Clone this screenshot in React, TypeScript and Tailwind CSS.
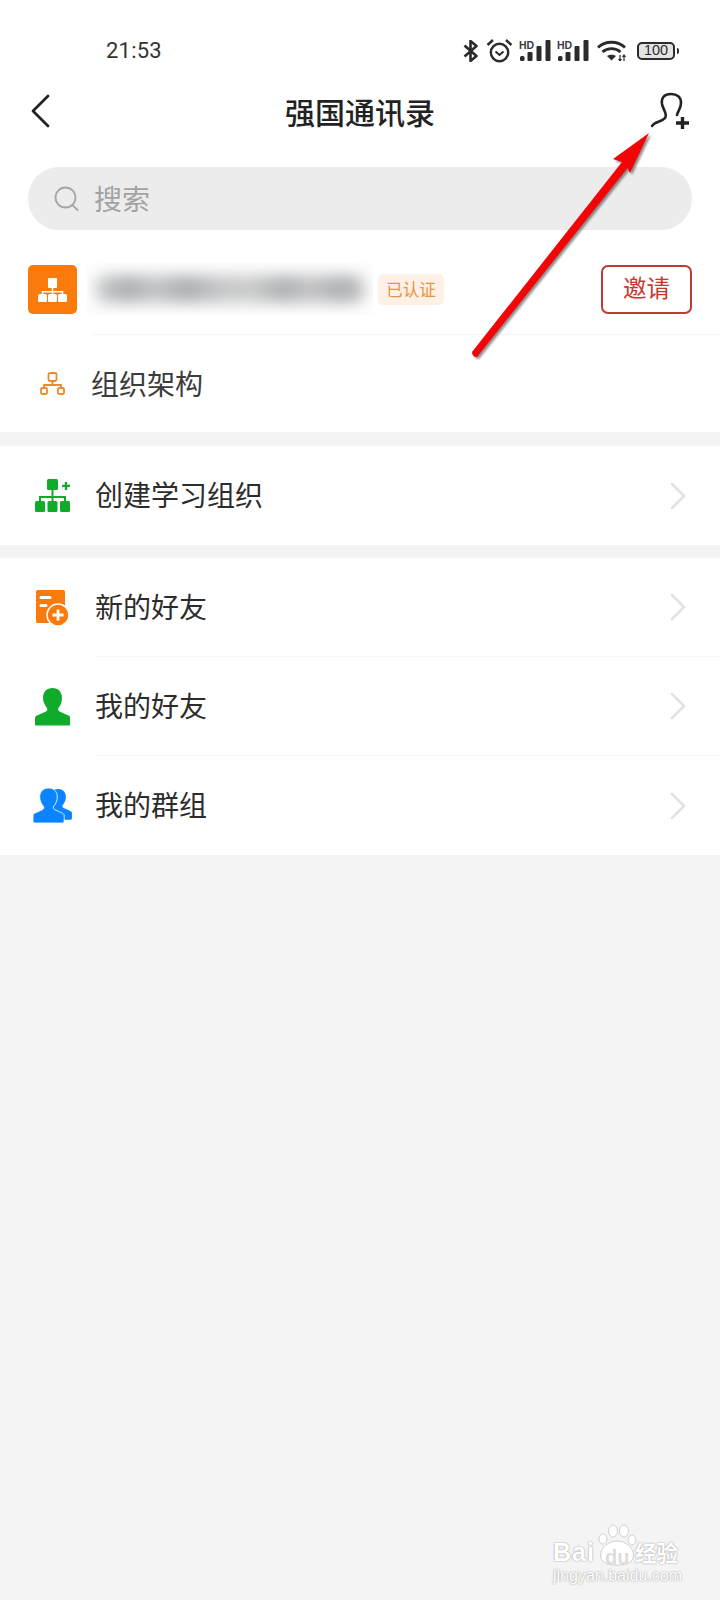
const CJK = "font-['Noto_Sans_CJK_SC','Noto_Sans',sans-serif]";

function Chevron() {
  return (
    <svg width="16" height="28" viewBox="0 0 16 28" fill="none" className="shrink-0">
      <path d="M2 2l12 12L2 26" stroke="#e2e2e2" strokeWidth="2.6" strokeLinecap="round" strokeLinejoin="round" />
    </svg>
  );
}

function Bluetooth() {
  return (
    <svg width="15" height="22" viewBox="0 0 15 22" fill="none">
      <path d="M1.5 5.500l12 10.500-6 5V1l6 5-12 10.500" stroke="#2b2b2b" strokeWidth="2.6" strokeLinejoin="round" />
    </svg>
  );
}

function Alarm() {
  return (
    <svg width="27" height="25" viewBox="0 0 27 25" fill="none">
      <circle cx="13.500" cy="14.500" r="8.700" stroke="#2b2b2b" strokeWidth="2.400" />
      <path d="M9.500 13.500l4 3.500 4-3.500" stroke="#2b2b2b" strokeWidth="2" />
      <path d="M1.500 7l5.500-5M25.500 7L20 2" stroke="#2b2b2b" strokeWidth="2.400" />
    </svg>
  );
}

function Signal() {
  return (
    <div className="relative h-[21px] w-[32px]">
      <span className="absolute left-0 top-0 text-[10.500px] font-bold leading-[10px] text-[#3a3a3a] font-['Liberation_Sans',sans-serif]">HD</span>
      <svg width="32" height="21" viewBox="0 0 32 21" className="absolute left-0 top-0">
        <rect x="1" y="16" width="4.500" height="5" rx="1.500" fill="#2b2b2b" />
        <rect x="8.500" y="12" width="5" height="9" rx="1" fill="#2b2b2b" />
        <rect x="17.500" y="6" width="5" height="15" rx="1" fill="#2b2b2b" />
        <rect x="26.500" y="0" width="5" height="21" rx="1" fill="#2b2b2b" />
      </svg>
    </div>
  );
}

function Wifi() {
  return (
    <svg width="30" height="21" viewBox="0 0 30 21" fill="none">
      <path d="M1 7.500C8 .5 21 .5 28 7.500" stroke="#2b2b2b" strokeWidth="2.800" />
      <path d="M5.500 12c5-4.500 13-4.500 18 0" stroke="#2b2b2b" strokeWidth="2.800" />
      <path d="M10 16c2.500-1.800 6.500-1.800 9 0l-4.500 4.500z" fill="#2b2b2b" />
      <path d="M23 15v6M27 15v6M21.500 19l1.500 2 1.500-2M25.500 17l1.500-2 1.500 2" stroke="#2b2b2b" strokeWidth="1.200" />
    </svg>
  );
}

function Battery() {
  return (
    <div className="flex items-center gap-[2px]">
      <div className="flex h-[18px] w-[38px] items-center justify-center rounded-[5px] border-[2.500px] border-[#2b2b2b] bg-[#e4e4e4] text-[14.500px] leading-none text-[#2b2b2b] font-['Liberation_Sans',sans-serif]">100</div>
      <div className="h-[6px] w-[2px] rounded-r bg-[#2b2b2b]" />
    </div>
  );
}

function OrgFilled() {
  return (
    <svg width="29" height="24" viewBox="0 0 29 24" fill="white">
      <rect x="10" y="0" width="9" height="10" rx="1" />
      <path d="M13.700 10h1.600v3h10v3h-1.600v-1.400h-8.400V16h-1.600v-1.400H5.300V16H3.700v-3h10z" />
      <rect x="0" y="16" width="9" height="8" rx="1.500" />
      <rect x="10" y="16" width="9" height="8" rx="1.500" />
      <rect x="20" y="16" width="9" height="8" rx="1.500" />
    </svg>
  );
}

function OrgOutline() {
  return (
    <svg width="25" height="23" viewBox="0 0 25 23" fill="none" stroke="#ec8a2c" strokeWidth="1.800">
      <rect x="8.500" y="1" width="8" height="8" rx="1.500" />
      <path d="M12.500 9v4M4 16v-3h17v3" />
      <rect x="1" y="16" width="6" height="6" rx="1.200" />
      <rect x="18" y="16" width="6" height="6" rx="1.200" />
    </svg>
  );
}

function OrgAdd() {
  return (
    <svg width="35" height="33" viewBox="0 0 35 33" fill="#10ab2b">
      <rect x="12" y="0" width="11" height="11" rx="1.500" />
      <path d="M27 5.700h2.800V3h2.400v2.700H35v2.400h-2.800V11h-2.400V8.100H27z" />
      <path d="M16.500 11h2v6h12.500v5h-2v-3H18.500v3h-2v-3H6v3H4v-5h12.500z" />
      <rect x="0" y="22" width="10" height="11" rx="1.500" />
      <rect x="12.500" y="22" width="10" height="11" rx="1.500" />
      <rect x="25" y="22" width="10" height="11" rx="1.500" />
    </svg>
  );
}

function NewFriend() {
  return (
    <svg width="34" height="36" viewBox="0 0 34 36">
      <rect x="0" y="0" width="29" height="33" rx="1.500" fill="#fb7a0c" />
      <rect x="3.500" y="6" width="12" height="3" rx="1.500" fill="#fff" />
      <rect x="3.500" y="14" width="8" height="3" rx="1.500" fill="#fff" />
      <circle cx="22" cy="25" r="11" fill="#fb7a0c" stroke="#fff" strokeWidth="1.500" />
      <path d="M22 19.500v11M16.500 25h11" stroke="#fff" strokeWidth="2.800" />
    </svg>
  );
}

function Friend() {
  return (
    <svg width="35" height="38" viewBox="0 0 35 38" fill="#10ab2b">
      <path d="M17.500 0c6 0 9.500 4 9.500 10 0 4-1.500 7.500-3.500 10-.8 1.500-.3 3 1.500 3.800l8.500 3.700c1.500.7 2 1.500 2 3v5.500c0 1-.5 1.500-1.500 1.500h-33C.5 37.500 0 37 0 36v-5.500c0-1.500.5-2.300 2-3l8.500-3.700c1.800-.8 2.300-2.300 1.500-3.800C10 17.500 8 14 8 10c0-6 3.500-10 9.500-10z" />
    </svg>
  );
}

const PERSON =
  "M15.500 0c5.500 0 8.800 3.800 8.800 9 0 3.500-1.500 6.800-3.500 9.200-.9 1.300-.4 2.800 1 3.500l7.500 3.400c1.400.6 1.900 1.500 1.900 3V33c0 1.300-.7 2-2 2H2c-1.300 0-2-.7-2-2v-4.900c0-1.500.5-2.400 1.900-3l7.500-3.400c1.400-.7 1.900-2.200 1-3.500C8.200 15.800 6.700 12.500 6.700 9c0-5.200 3.300-9 8.800-9z";

function Group() {
  return (
    <svg width="39" height="35" viewBox="0 0 39 35" fill="#0a84ff">
      <path d={PERSON} transform="translate(11.500 1) scale(.88)" />
      <path d={PERSON} stroke="#ffffff" strokeWidth=".8" />
    </svg>
  );
}

function Row({ icon, label, divider }: { icon: React.ReactNode; label: string; divider?: boolean }) {
  return (
    <div className="flex h-[99px] items-center">
      <div className="flex w-[95px] shrink-0 items-center justify-center pl-[10px]">{icon}</div>
      <div className={`flex h-full flex-1 items-center justify-between pr-[34px] ${divider ? "border-b border-[#f5f5f5]" : ""}`}>
        <span className="pb-[3px] text-[28px] leading-none text-[#2c2c2c]">{label}</span>
        <Chevron />
      </div>
    </div>
  );
}

export default function App() {
  return (
    <div className={`relative flex h-[1600px] w-[720px] flex-col overflow-hidden bg-[#f4f4f4] ${CJK}`}>
      <div className="bg-white">
        {/* status bar */}
        <div className="flex h-[91px] items-center justify-between pl-[106px] pr-[41px] pt-[10px]">
          <span className="text-[22px] leading-none tracking-[0.2px] text-[#333] font-['Roboto',sans-serif]">21:53</span>
          <div className="flex items-center">
            <Bluetooth />
            <div className="ml-[8px]"><Alarm /></div>
            <div className="ml-[6px]"><Signal /></div>
            <div className="ml-[6px]"><Signal /></div>
            <div className="ml-[8px]"><Wifi /></div>
            <div className="ml-[10px]"><Battery /></div>
          </div>
        </div>

        {/* nav */}
        <div className="relative flex h-[43px] items-center justify-center">
          <svg width="20" height="34" viewBox="0 0 20 34" fill="none" className="absolute left-[30px] top-[3px]">
            <path d="M18 2L3 17l15 15" stroke="#222" strokeWidth="2.800" strokeLinecap="round" strokeLinejoin="round" />
          </svg>
          <span className="pb-[3px] text-[30px] font-medium leading-none text-[#222]">强国通讯录</span>
          <svg width="40" height="38" viewBox="0 0 40 38" fill="none" className="absolute left-[650px] top-px">
            <path d="M2 34C5 29 12 30 15 26 18 22 13 18 12 12 11 5 15 2 21 2 27 2 31 5 31 11 31 16 28 19 27 23" stroke="#222" strokeWidth="2.600" strokeLinecap="round" />
            <path d="M32.500 25v12M26 31h13" stroke="#222" strokeWidth="3.400" />
          </svg>
        </div>

        {/* search */}
        <div className="px-[28px] pt-[33px]">
          <div className="flex h-[63px] items-center rounded-[31px] bg-[#ececec] pl-[26px]">
            <svg width="26" height="26" viewBox="0 0 26 26" fill="none" className="shrink-0">
              <circle cx="11.500" cy="11.500" r="10" stroke="#a6a6a6" strokeWidth="1.800" />
              <path d="M18.500 19l5 5" stroke="#a6a6a6" strokeWidth="1.800" strokeLinecap="round" />
            </svg>
            <span className="ml-[14px] pb-[2px] text-[28px] leading-none text-[#a3a3a3]">搜索</span>
          </div>
        </div>

        {/* company row */}
        <div className="flex h-[104px] items-start pl-[28px] pr-[28px] pt-[35px]">
          <div className="flex h-[49px] w-[49px] shrink-0 items-center justify-center rounded-[5px] bg-[#fb7a0c]">
            <OrgFilled />
          </div>
          <div className="ml-[10px] mt-[-2px] h-[52px] w-[286px] shrink-0 overflow-hidden bg-[#fdfdfd]">
            <div className="ml-[8px] mt-[12px] h-[28px] w-[270px] rounded-[10px] bg-[linear-gradient(90deg,#cfd1d3,#aeb0b2_12%,#c4c6c8_22%,#aeb0b2_34%,#c6c7c9_46%,#cbcccd_58%,#b0b2b4_70%,#c4c5c7_80%,#aeb0b2_92%,#c8cacc)] blur-[7px]" />
          </div>
          <div className="ml-[5px] mt-[9px] flex h-[31px] w-[66px] shrink-0 items-center justify-center rounded-[5px] bg-[#fdf1e6] text-[16.500px] leading-none text-[#e9923f]">已认证</div>
          <div className="ml-auto flex h-[49px] w-[91px] items-center justify-center rounded-[7px] border-[2px] border-[#bd3b34] pb-[3px] text-[23.500px] leading-none text-[#c8362e]">邀请</div>
        </div>

        {/* org row */}
        <div className="ml-[92px] h-px bg-[#f6f6f6]" />
        <div className="flex h-[97px] items-center">
          <div className="flex w-[91px] shrink-0 items-center justify-center pl-[14px]"><OrgOutline /></div>
          <span className="pb-[2px] text-[28px] leading-none text-[#3c3c3c]">组织架构</span>
        </div>
      </div>

      <div className="mt-[14px] bg-white">
        <Row icon={<OrgAdd />} label="创建学习组织" />
      </div>

      <div className="mt-[13px] bg-white">
        <Row icon={<NewFriend />} label="新的好友" divider />
        <Row icon={<Friend />} label="我的好友" divider />
        <Row icon={<Group />} label="我的群组" />
      </div>

      {/* red annotation arrow */}
      <svg width="720" height="380" viewBox="0 0 720 380" className="absolute left-0 top-0" fill="none">
        <path d="M649 133L613 159 622 162 472 352Q472 357 477 357L627.500 168 630 173Z" fill="#333" opacity="0.55" transform="translate(2 2)" className="blur-[1px]" />
        <path d="M649 133L613 159 622 162 472 352Q472 357 477 357L627.500 168 630 173Z" fill="#f40404" />
      </svg>

      {/* watermark */}
      <div className="absolute left-[553px] top-[1520px] h-[64px] w-[128px] font-['Liberation_Sans',sans-serif] text-white [text-shadow:0_0_2px_#a8a8a8,0_0_1px_#b4b4b4]">
        <span className="absolute left-0 top-[20px] text-[25px] font-bold leading-none tracking-[1px]">Bai</span>
        <svg width="42" height="48" viewBox="0 0 42 48" className="absolute left-[44px] top-0" fill="#fff" stroke="#d0d0d0" strokeWidth="1">
          <ellipse cx="6" cy="19" rx="4" ry="5" />
          <ellipse cx="16" cy="11" rx="4.500" ry="6" />
          <ellipse cx="27" cy="11" rx="4.500" ry="6" />
          <ellipse cx="35" cy="20" rx="4" ry="5" />
          <path d="M20 21c9 0 16.500 7 16.500 14 0 7-6 10-16.500 10S3.500 42 3.500 35c0-7 7.500-14 16.500-14z" />
        </svg>
        <span className="absolute left-[52px] top-[27px] text-[20px] font-bold leading-none text-[#dddddd] [text-shadow:none]">du</span>
        <span className={`absolute left-[82px] top-[21px] text-[21.500px] font-bold leading-none ${CJK}`}>经验</span>
        <span className="absolute left-0 top-[48px] whitespace-nowrap text-[16px] leading-none">jingyan.baidu.com</span>
      </div>
    </div>
  );
}
